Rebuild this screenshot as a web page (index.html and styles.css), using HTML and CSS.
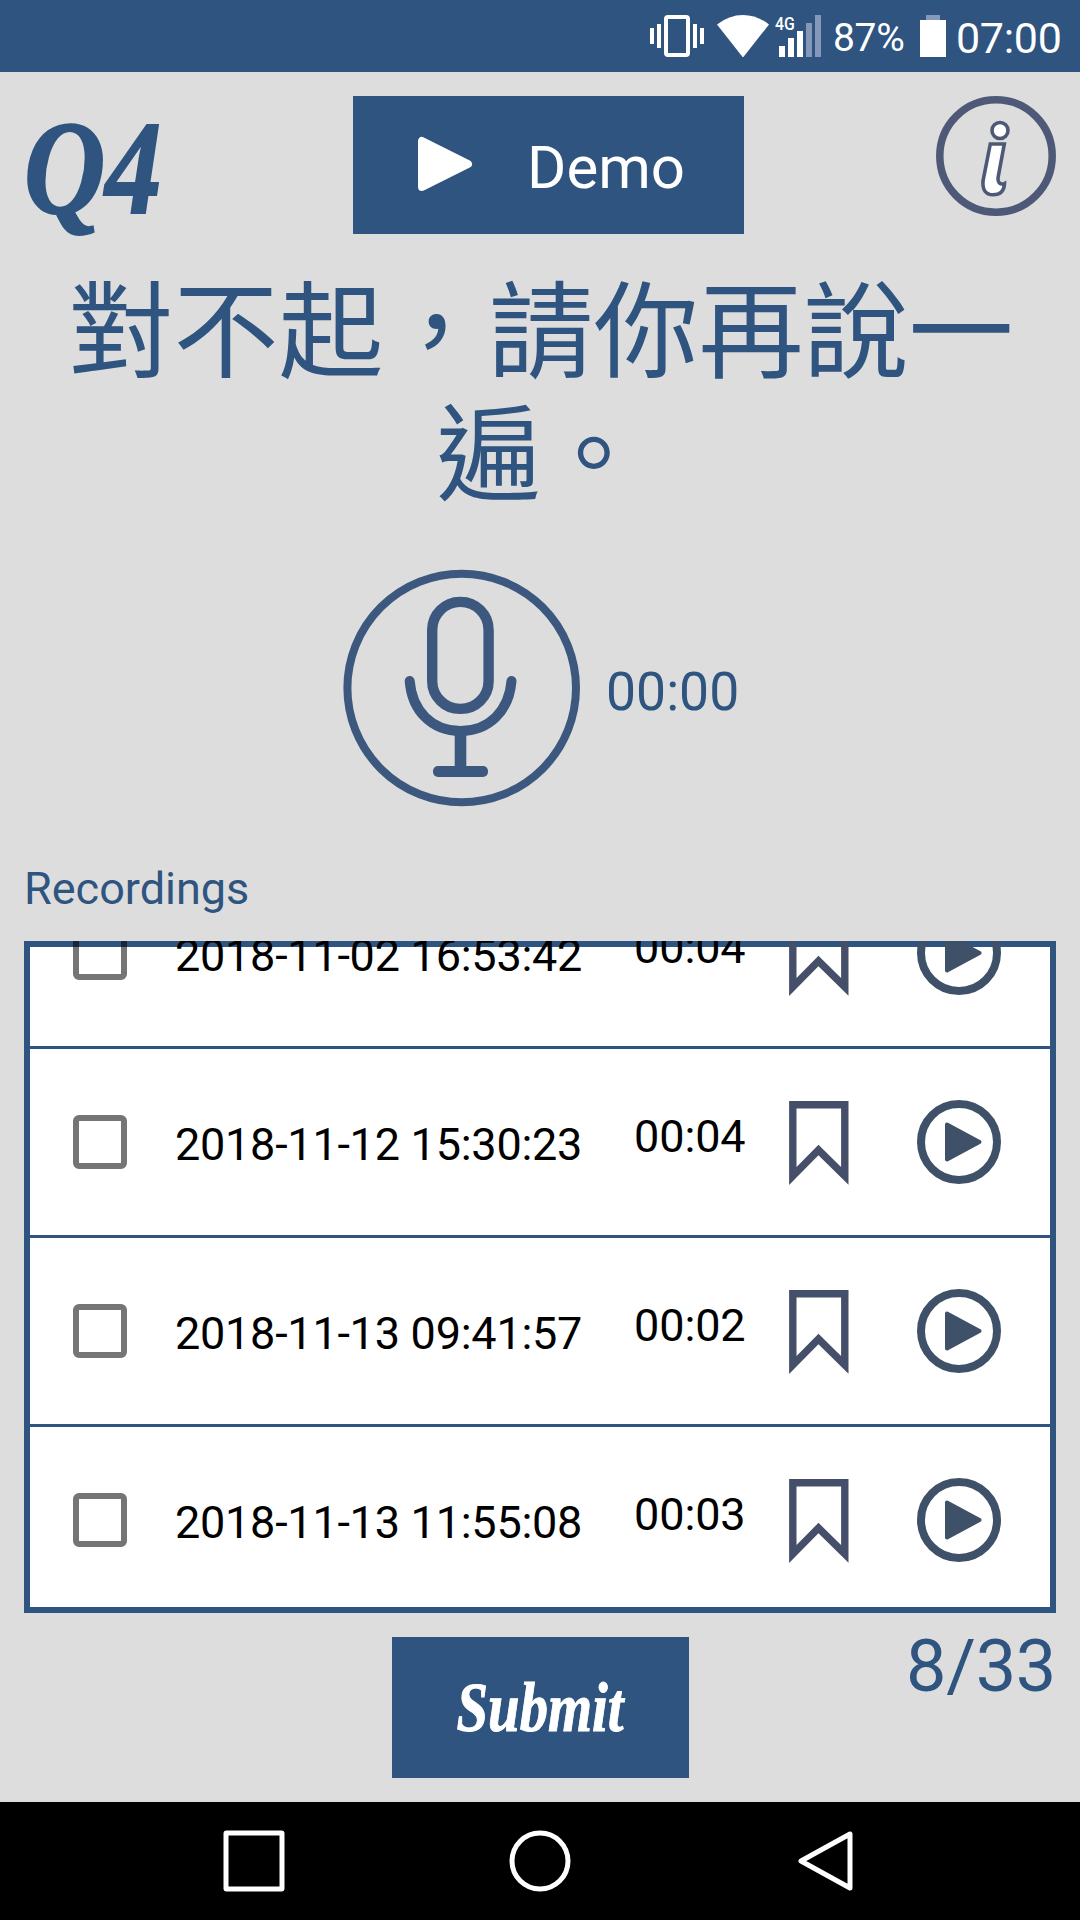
FILE: index.html
```html
<!DOCTYPE html>
<html lang="zh-Hant">
<head>
<meta charset="utf-8">
<title>Q4</title>
<link rel="stylesheet" href="styles.css">
</head>
<body>
<svg class="defs" aria-hidden="true">
  <symbol id="bookmark" viewBox="0 0 60 84">
    <path d="M3.8 3.8H55.8V75L29.5 49 3.8 75Z" fill="none" stroke="#454f69" stroke-width="7.4" stroke-miterlimit="10"/>
  </symbol>
  <symbol id="play" viewBox="0 0 84 84">
    <circle cx="42" cy="42" r="38" fill="none" stroke="#3f5168" stroke-width="8"/>
    <path d="M30 24.5V59.5L62.500 42Z" fill="#3f5168" stroke="#3f5168" stroke-width="4" stroke-linejoin="round"/>
  </symbol>
</svg>

<div class="status">
  <svg class="vibrate" width="54" height="42" viewBox="0 0 54 42" fill="#fff">
    <path d="M0 13h4v16H0zM7 9h4v24H7zM43 9h4v24h-4zM50 13h4v16h-4z"/>
    <rect x="16" y="2" width="22" height="38" rx="2" fill="none" stroke="#fff" stroke-width="4"/>
  </svg>
  <svg class="wifi" width="52" height="42" viewBox="0 0 52 42" fill="#fff"><path d="M0 9.500Q12 0 26 0T52 9.500L26 42.500Z"/></svg>
  <div class="cell">
    <svg width="46" height="42" viewBox="0 0 46 42" fill="#fff">
      <path d="M4 31h6v11H4zM13 23h6v19h-6zM22 16h6v26h-6z"/>
      <path d="M31 8h6v34h-6zM40 0h6v42h-6z" fill="#8499b9"/>
    </svg>
    <span class="net">4G</span>
  </div>
  <span class="percent">87%</span>
  <svg class="battery" width="26" height="42" viewBox="0 0 26 42"><path d="M6 0h14v5H6z" fill="#8499b9"/><path d="M0 5h26v37H0z" fill="#fff"/></svg>
  <span class="clock">07:00</span>
</div>

<main class="screen">
  <header class="top">
    <div class="qno"><span>Q4</span></div>
    <div class="demo">
      <svg width="56" height="56" viewBox="0 0 56 56"><path d="M5 5V51L51 28Z" fill="#fff" stroke="#fff" stroke-width="8" stroke-linejoin="round"/></svg>
      <span>Demo</span>
    </div>
    <svg class="info" width="120" height="120" viewBox="0 0 120 120" fill="#fff" stroke="#4d5976">
      <circle cx="60" cy="60" r="56.200" fill="none" stroke-width="7.500"/>
      <circle cx="64" cy="34.500" r="8" stroke-width="3.600"/>
      <path d="M54.300 48H68.300L62 82Q61.500 88.500 67.500 88 L68.500 87.500Q68 98.800 57 98.800 46 98.500 47 85Z" stroke-width="3.600"/>
    </svg>
  </header>

  <h1 class="prompt">對不起，請你再說一遍。</h1>

  <div class="recorder">
    <svg width="240" height="240" viewBox="0 0 240 240" fill="none" stroke="#3c587e">
      <circle cx="119.700" cy="120" r="114.300" stroke-width="8"/>
      <rect x="90.200" y="33.900" width="56.400" height="107" rx="28" stroke-width="10.400"/>
      <path d="M67.700 113C70 143 90 163 118.500 163S167 143 169.500 113" stroke-width="10" stroke-linecap="round"/>
      <path d="M118.500 163V202" stroke-width="11.600"/>
      <rect x="91" y="198" width="55" height="11" rx="5" fill="#3c587e" stroke="none"/>
    </svg>
    <span class="timer">00:00</span>
  </div>

  <h2 class="label">Recordings</h2>

  <div class="list">
    <div class="row"><i class="check"></i><span class="date">2018-11-02 16:53:42</span><span class="len">00:04</span><svg class="bm"><use href="#bookmark"/></svg><svg class="pl"><use href="#play"/></svg></div>
    <div class="row"><i class="check"></i><span class="date">2018-11-12 15:30:23</span><span class="len">00:04</span><svg class="bm"><use href="#bookmark"/></svg><svg class="pl"><use href="#play"/></svg></div>
    <div class="row"><i class="check"></i><span class="date">2018-11-13 09:41:57</span><span class="len">00:02</span><svg class="bm"><use href="#bookmark"/></svg><svg class="pl"><use href="#play"/></svg></div>
    <div class="row"><i class="check"></i><span class="date">2018-11-13 11:55:08</span><span class="len">00:03</span><svg class="bm"><use href="#bookmark"/></svg><svg class="pl"><use href="#play"/></svg></div>
  </div>

  <footer class="bottom">
    <div class="submit"><span>Submit</span></div>
    <span class="count">8/33</span>
  </footer>
</main>

<nav class="nav">
  <svg width="62" height="62" viewBox="0 0 62 62"><rect x="3" y="3" width="56" height="56" rx=".5"/></svg>
  <svg width="62" height="62" viewBox="0 0 62 62"><circle cx="31" cy="31" r="28"/></svg>
  <svg width="62" height="62" viewBox="0 0 62 62"><path d="M55 4V58L6 31Z" stroke-linejoin="round"/></svg>
</nav>
</body>
</html>
```
FILE: styles.css
```css
* { box-sizing: border-box; margin: 0; padding: 0; }
body {
  width: 1080px;
  height: 1920px;
  display: flex;
  flex-direction: column;
  overflow: hidden;
  background: #ddd;
  color: #2e547f;
  font-family: Roboto, "Noto Sans CJK TC", sans-serif;
}
svg { display: block; flex: none; }
.defs { display: none; }

/* Status bar */
.status {
  height: 72px;
  flex: none;
  display: flex;
  align-items: center;
  justify-content: flex-end;
  padding-right: 17px;
  background: #2e547f;
  color: #fff;
  white-space: nowrap;
}
.wifi { margin-left: 13px; }
.cell { position: relative; margin-left: 6px; }
.net {
  position: absolute;
  left: 0;
  top: -1px;
  font-size: 18px;
  line-height: 20px;
  font-weight: 500;
  transform: scaleX(.88);
  transform-origin: left;
}
.percent {
  width: 72px;
  margin-left: 12px;
  font-size: 39px;
  line-height: 72px;
  padding-top: 3px;
  letter-spacing: -.3px;
}
.battery { margin-left: 15px; }
.clock {
  width: 107px;
  margin-left: 10px;
  font-size: 43px;
  line-height: 72px;
  padding-top: 4px;
  letter-spacing: -.3px;
}

.screen {
  height: 1730px;
  flex: none;
  display: flex;
  flex-direction: column;
  padding: 24px 24px 0;
}

/* Header */
.top {
  height: 138px;
  display: grid;
  grid-template-columns: 329px 391px 1fr;
  grid-template-rows: 138px;
}
.qno, .submit {
  font-family: "Liberation Serif", serif;
  font-weight: bold;
  font-style: italic;
}
.qno { font-size: 134px; line-height: 144px; -webkit-text-stroke: 2px #2e547f; }
.qno span {
  display: inline-block;
  transform: scaleX(.84);
  transform-origin: left;
}
.demo {
  display: flex;
  align-items: center;
  gap: 54px;
  padding-left: 64px;
  background: #2e547f;
  color: #fff;
  font-size: 60px;
}
.demo svg { margin-bottom: 2px; }
.demo span { padding-top: 5px; }
.info { justify-self: end; }

.prompt {
  margin-top: 38px;
  height: 246px;
  padding: 0 39px 0 41px;
  font-size: 105px;
  font-weight: 400;
  line-height: 123px;
  text-align: center;
  word-break: break-all;
}

.recorder {
  height: 240px;
  margin-top: 50px;
  padding-left: 318px;
  display: flex;
  align-items: center;
  gap: 24px;
}
.timer { font-size: 53.500px; padding-top: 6px; }

.label {
  height: 60px;
  margin-top: 51px;
  font-size: 45px;
  font-weight: 400;
  line-height: 60px;
}

/* Scrolled list: the rows paint over the frame and are cut at its outer edge */
.list {
  height: 672px;
  flex: none;
  margin-top: 22px;
  padding: 0 6px;
  overflow: hidden;
  background: #fff;
  box-shadow: inset 0 0 0 6px #2e547f;
}
.row {
  height: 189px;
  display: flex;
  align-items: center;
  padding-left: 43px;
  border-bottom: 3px solid #2e547f;
  color: #000;
  font-size: 45px;
  white-space: nowrap;
}
.row:first-child { margin-top: -81px; }
.check {
  width: 54px;
  height: 54px;
  flex: none;
  border: 6px solid rgba(0, 0, 0, .54);
  border-radius: 6px;
}
.date { width: 458px; margin-left: 48px; padding-top: 4px; letter-spacing: -.25px; }
.len { width: 155px; margin-left: 1px; padding-bottom: 12px; letter-spacing: -.1px; }
.bm { width: 60px; height: 84px; margin-top: 2px; }
.pl { width: 84px; height: 84px; margin-left: 68px; }

.bottom {
  margin-top: 24px;
  display: flex;
  justify-content: space-between;
  padding-left: 368px;
}
.submit {
  width: 297px;
  height: 141px;
  display: flex;
  align-items: center;
  justify-content: center;
  background: #2e547f;
  color: #fff;
  font-size: 70px;
  -webkit-text-stroke: 1px #fff;
}
.submit span { transform: scaleX(.81); }
.count { font-size: 72px; line-height: 60px; letter-spacing: -.3px; }

/* System navigation bar */
.nav {
  height: 118px;
  flex: none;
  display: flex;
  align-items: center;
  gap: 224px;
  padding-left: 223px;
  background: #000;
}
.nav svg { fill: none; stroke: #fff; stroke-width: 5px; }
```
